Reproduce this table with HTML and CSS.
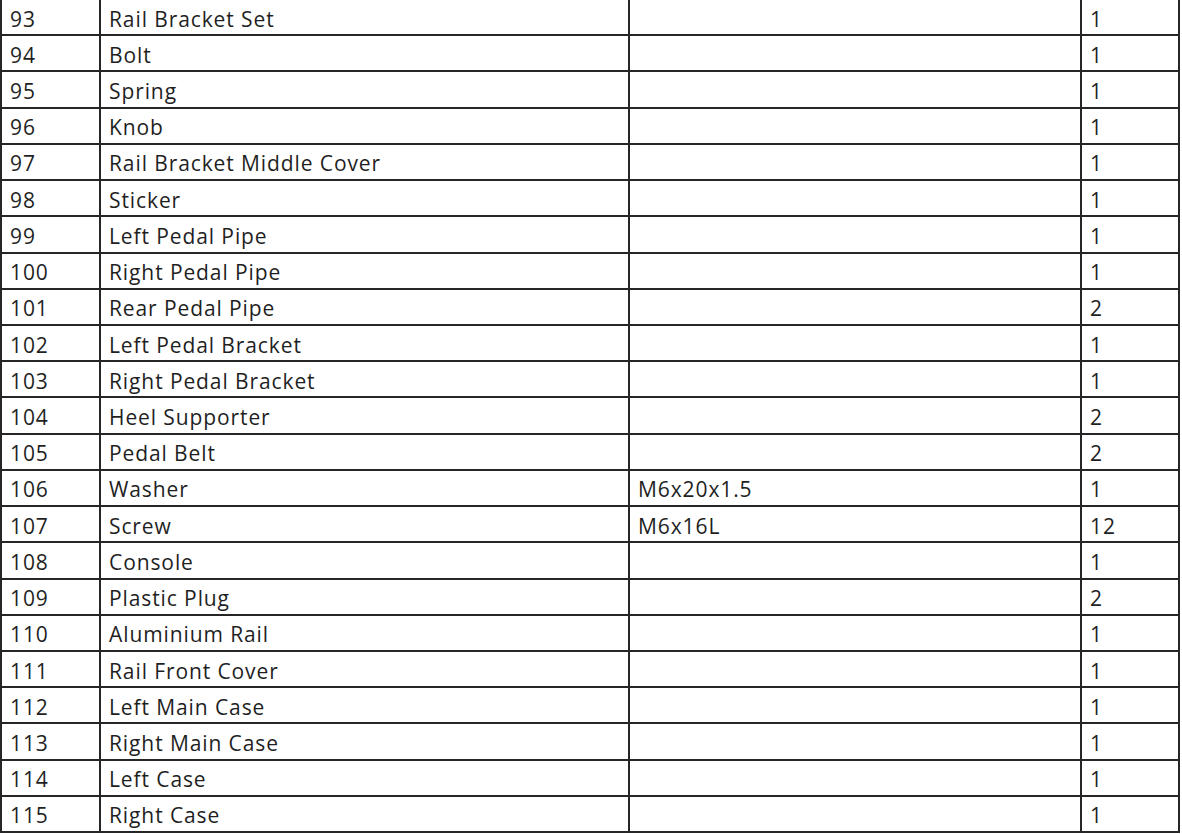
FILE: index.html
```html
<!DOCTYPE html>
<html>
<head>
<meta charset="utf-8">
<link rel="stylesheet" href="styles.css">
</head>
<body>
<table class="parts">
<colgroup><col class="c-no"><col class="c-name"><col class="c-spec"><col class="c-qty"></colgroup>
<tbody>
<tr><td>93</td><td>Rail Bracket Set</td><td></td><td>1</td></tr>
<tr><td>94</td><td>Bolt</td><td></td><td>1</td></tr>
<tr><td>95</td><td>Spring</td><td></td><td>1</td></tr>
<tr><td>96</td><td>Knob</td><td></td><td>1</td></tr>
<tr><td>97</td><td>Rail Bracket Middle Cover</td><td></td><td>1</td></tr>
<tr><td>98</td><td>Sticker</td><td></td><td>1</td></tr>
<tr><td>99</td><td>Left Pedal Pipe</td><td></td><td>1</td></tr>
<tr><td>100</td><td>Right Pedal Pipe</td><td></td><td>1</td></tr>
<tr><td>101</td><td>Rear Pedal Pipe</td><td></td><td>2</td></tr>
<tr><td>102</td><td>Left Pedal Bracket</td><td></td><td>1</td></tr>
<tr><td>103</td><td>Right Pedal Bracket</td><td></td><td>1</td></tr>
<tr><td>104</td><td>Heel Supporter</td><td></td><td>2</td></tr>
<tr><td>105</td><td>Pedal Belt</td><td></td><td>2</td></tr>
<tr><td>106</td><td>Washer</td><td>M6x20x1.5</td><td>1</td></tr>
<tr><td>107</td><td>Screw</td><td>M6x16L</td><td>12</td></tr>
<tr><td>108</td><td>Console</td><td></td><td>1</td></tr>
<tr><td>109</td><td>Plastic Plug</td><td></td><td>2</td></tr>
<tr><td>110</td><td>Aluminium Rail</td><td></td><td>1</td></tr>
<tr><td>111</td><td>Rail Front Cover</td><td></td><td>1</td></tr>
<tr><td>112</td><td>Left Main Case</td><td></td><td>1</td></tr>
<tr><td>113</td><td>Right Main Case</td><td></td><td>1</td></tr>
<tr><td>114</td><td>Left Case</td><td></td><td>1</td></tr>
<tr><td>115</td><td>Right Case</td><td></td><td>1</td></tr>
</tbody>
</table>
</body>
</html>
```
FILE: styles.css
```css
html, body {
  margin: 0;
  padding: 0;
  background: #ffffff;
}
body {
  overflow: hidden;
}
.parts {
  border-collapse: collapse;
  table-layout: fixed;
  width: 1180px;
  margin-top: -2px;
  font-family: "Open Sans", "Noto Sans", sans-serif;
  font-weight: 400;
  font-size: 21px;
  letter-spacing: 0.9px;
  color: #1f1f1f;
}
.c-no { width: 99px; }
.c-name { width: 529px; }
.c-spec { width: 452px; }
.c-qty { width: 98px; }
.parts td {
  border: 2px solid #262626;
  padding: 4px 0 0 8px;
  box-sizing: border-box;
  height: 36.23px;
  white-space: nowrap;
  vertical-align: middle;
  line-height: 1;
}
```
